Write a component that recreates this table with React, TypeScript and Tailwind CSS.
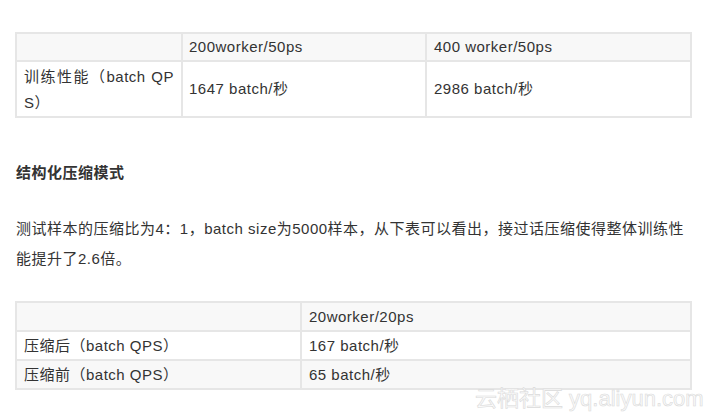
export default function App() {
  const font = "[font-family:'Liberation_Sans','Noto_Sans_CJK_SC',sans-serif]";
  return (
    <div className={`relative w-[723px] h-[418px] overflow-hidden bg-white text-[#333] text-[15px] tracking-[0.5px] ${font}`}>
      <div className="pl-[15px] pt-[32px] w-[692px]">
        {/* Table 1 */}
        <div className="grid grid-cols-[164px_242px_263px] gap-[2px] p-[2px] bg-[#e6e6e6] w-[677px] leading-[26px]">
          <div className="bg-[#f8f8f8] h-[26px]"></div>
          <div className="bg-[#f8f8f8] h-[26px] px-[6px] flex items-center">200worker/50ps</div>
          <div className="bg-[#f8f8f8] h-[26px] px-[7px] flex items-center">400 worker/50ps</div>
          <div className="bg-white h-[54px] px-[7px] py-[2px] text-justify break-all">训练性能（batch QPS）</div>
          <div className="bg-white h-[54px] px-[6px] flex items-center">1647 batch/秒</div>
          <div className="bg-white h-[54px] px-[7px] flex items-center">2986 batch/秒</div>
        </div>

        <h3 className="mt-[40px] pl-[1px] font-bold leading-[30px]">结构化压缩模式</h3>

        <p className="mt-[26px] pl-[1px] leading-[30px] w-[680px]">
          测试样本的压缩比为4：1，batch size为5000样本，从下表可以看出，接过话压缩使得整体训练性能提升了2.6倍。
        </p>

        {/* Table 2 */}
        <div className="mt-[27px] grid grid-cols-[283px_388px] gap-[2px] p-[2px] bg-[#e6e6e6] w-[677px] leading-[27px]">
          <div className="bg-[#f8f8f8] h-[27px]"></div>
          <div className="bg-[#f8f8f8] h-[27px] px-[7px]">20worker/20ps</div>
          <div className="bg-white h-[27px] px-[7px]">压缩后（batch QPS）</div>
          <div className="bg-white h-[27px] px-[7px]">167 batch/秒</div>
          <div className="bg-[#f8f8f8] h-[27px] px-[7px]">压缩前（batch QPS）</div>
          <div className="bg-[#f8f8f8] h-[27px] px-[7px]">65 batch/秒</div>
        </div>
      </div>

      {/* Watermark */}
      <div className="absolute left-[475px] top-[385px] text-[22px] leading-[28px] tracking-normal text-[#fbfbfb] [-webkit-text-stroke:0.6px_#dadada] whitespace-nowrap">
        云栖社区 yq.aliyun.com
      </div>
    </div>
  );
}
